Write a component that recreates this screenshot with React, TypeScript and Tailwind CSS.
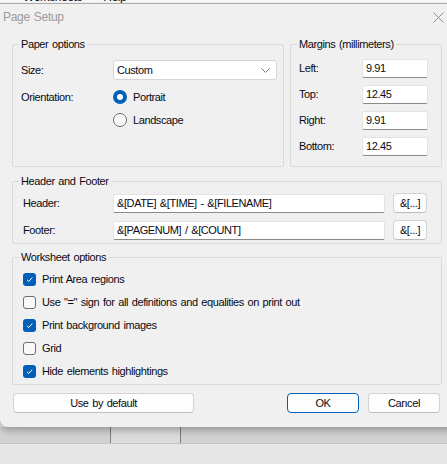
import React from 'react';

const GroupBox = ({ title, className, children }: { title: string; className?: string; children: React.ReactNode }) => (
    <fieldset className={`border border-[#d9d9d9] rounded-[2px] p-0 m-0 ${className ?? ''}`}>
        <legend className="ml-[6px] px-[2px] leading-[14px]">{title}</legend>
        {children}
    </fieldset>
);

const TextBox = ({ value, className }: { value: string; className?: string }) => (
    <div className={`h-[19px] bg-white border border-[#e3e3e3] border-b-[#8a8a8a] rounded-[2px] pl-[3px] flex items-center ${className ?? ''}`}>
        {value}
    </div>
);

const Check = ({ checked, label }: { checked: boolean; label: string }) => (
    <div className="h-[23px] flex items-center gap-[6px]">
        {checked ? (
            <div className="w-[13px] h-[13px] rounded-[3px] bg-[#005fb8] flex items-center justify-center">
                <svg width="9" height="9" viewBox="0 0 9 9">
                    <path d="M2 4.8 L3.8 6.5 L7.2 2.6" fill="none" stroke="white" strokeWidth="1" />
                </svg>
            </div>
        ) : (
            <div className="w-[13px] h-[13px] rounded-[3px] border border-[#6e6e6e] bg-[#f9f9f9]" />
        )}
        <span>{label}</span>
    </div>
);

const Radio = ({ checked, label }: { checked: boolean; label: string }) => (
    <div className="h-[20px] flex items-center gap-[6px]">
        {checked ? (
            <div className="w-[14px] h-[14px] rounded-full bg-[#005fb8] flex items-center justify-center">
                <div className="w-[6px] h-[6px] rounded-full bg-white" />
            </div>
        ) : (
            <div className="w-[14px] h-[14px] rounded-full border border-[#6e6e6e] bg-[#f9f9f9]" />
        )}
        <span>{label}</span>
    </div>
);

const Btn = ({ label, primary, className }: { label: string; primary?: boolean; className?: string }) => (
    <div
        className={`h-[20px] flex items-center justify-center bg-[#fdfdfd] rounded-[4px] border ${
            primary ? 'border-[#005fb8]' : 'border-[#d3d3d3] border-b-[#bdbdbd]'
        } ${className ?? ''}`}
    >
        {label}
    </div>
);

export default function App() {
    return (
        <div className="w-[447px] h-[464px] overflow-hidden flex flex-col bg-[#e6e6e6] font-['Liberation_Sans',Arial,sans-serif] text-[11px] tracking-[-0.4px] [word-spacing:1px] text-[#0a0a14]">
            {/* window behind the dialog */}
            <div className="h-[3px] shrink-0 overflow-hidden bg-white">
                <div className="flex text-[12px] leading-[14px] -mt-[10px] pl-[23px] gap-[21px]">
                    <span>Worksheets</span>
                    <span>Help</span>
                </div>
            </div>

            {/* dialog */}
            <div className="relative z-10 h-[424px] shrink-0 w-[460px] bg-[#f0f0f0] border-t border-[#ababab] rounded-bl-[8px] shadow-[0_3px_8px_rgba(0,0,0,0.3)] flex flex-col pl-[12px]">
                <div className="h-[26px] flex items-center justify-between -ml-[9px] pr-[16px] mb-[7px]">
                    <span className="text-[12px] text-[#9b9b9b] tracking-[-0.3px]">Page Setup</span>
                    <svg width="11" height="11" viewBox="0 0 11 11">
                        <path d="M0.5 0.5 L10.5 10.5 M10.5 0.5 L0.5 10.5" stroke="#8f8f8f" strokeWidth="1" />
                    </svg>
                </div>

                <div className="flex gap-[6px]">
                    <GroupBox title="Paper options" className="w-[272px]">
                        <div className="h-[115px] flex flex-col pl-[8px] pt-[9px]">
                            <div className="flex items-center h-[20px]">
                                <span className="w-[92px]">Size:</span>
                                <div className="w-[164px] h-[20px] bg-white border border-[#d6d6d6] rounded-[3px] flex items-center justify-between pl-[3px] pr-[6px]">
                                    <span>Custom</span>
                                    <svg width="9" height="5" viewBox="0 0 9 5">
                                        <path d="M0.5 0.5 L4.5 4.5 L8.5 0.5" fill="none" stroke="#7a7a7a" strokeWidth="1" />
                                    </svg>
                                </div>
                            </div>
                            <div className="flex mt-[7px]">
                                <span className="w-[92px] h-[20px] flex items-center">Orientation:</span>
                                <div className="flex flex-col gap-[3px]">
                                    <Radio checked label="Portrait" />
                                    <Radio checked={false} label="Landscape" />
                                </div>
                            </div>
                        </div>
                    </GroupBox>

                    <GroupBox title="Margins (millimeters)" className="w-[152px]">
                        <div className="h-[115px] flex flex-col gap-[7px] pl-[8px] pt-[8px]">
                            {[
                                ['Left:', '9.91'],
                                ['Top:', '12.45'],
                                ['Right:', '9.91'],
                                ['Bottom:', '12.45'],
                            ].map(([l, v]) => (
                                <div key={l} className="flex items-center">
                                    <span className="w-[63px]">{l}</span>
                                    <TextBox value={v} className="w-[66px]" />
                                </div>
                            ))}
                        </div>
                    </GroupBox>
                </div>

                <GroupBox title="Header and Footer" className="w-[430px] mt-[7px]">
                    <div className="h-[55px] flex flex-col gap-[7px] pl-[10px] pt-[5px]">
                        {[
                            ['Header:', '&[DATE] &[TIME] - &[FILENAME]'],
                            ['Footer:', '&[PAGENUM] / &[COUNT]'],
                        ].map(([l, v]) => (
                            <div key={l} className="flex items-center h-[20px]">
                                <span className="w-[90px]">{l}</span>
                                <TextBox value={v} className="w-[272px]" />
                                <Btn label="&[...]" className="w-[34px] ml-[8px]" />
                            </div>
                        ))}
                    </div>
                </GroupBox>

                <GroupBox title="Worksheet options" className="w-[430px] mt-[6px]">
                    <div className="h-[120px] flex flex-col pl-[10px] pt-[4px]">
                        <Check checked label="Print Area regions" />
                        <Check checked={false} label={'Use "=" sign for all definitions and equalities on print out'} />
                        <Check checked label="Print background images" />
                        <Check checked={false} label="Grid" />
                        <Check checked label="Hide elements highlightings" />
                    </div>
                </GroupBox>

                <div className="flex justify-between w-[427px] ml-[1px] mt-[8px]">
                    <Btn label="Use by default" className="w-[181px]" />
                    <div className="flex gap-[9px]">
                        <Btn label="OK" primary className="w-[72px]" />
                        <Btn label="Cancel" className="w-[72px]" />
                    </div>
                </div>
            </div>

            {/* sheet tabs behind */}
            <div className="h-[16px] shrink-0 flex bg-[#d2d2d2]">
                <div className="w-[111px] border-r border-[#7d7d7d]" />
                <div className="w-[70px] border-r border-[#7d7d7d] bg-[#dcdcdc]" />
                <div className="flex-1" />
            </div>
            <div className="flex-1 border-t border-[#c4c4c4] bg-[#e6e6e6]" />
        </div>
    );
}
